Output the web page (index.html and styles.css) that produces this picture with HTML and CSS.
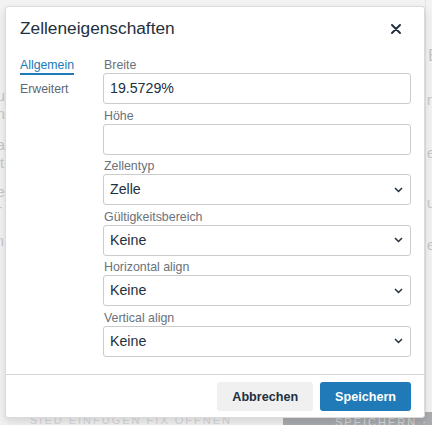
FILE: index.html
```html
<!DOCTYPE html>
<html lang="de">
<head>
<meta charset="utf-8">
<title>Zelleneigenschaften</title>
<link rel="stylesheet" href="styles.css">
</head>
<body>
<div class="page">
  <div class="bg-left">
    <span class="bg-frag f1">u</span>
    <span class="bg-frag f2">n</span>
    <span class="bg-frag f3">a</span>
    <span class="bg-frag f4">it</span>
    <span class="bg-frag f5">e</span>
    <span class="bg-frag f6">r</span>
    <span class="bg-frag f7">n</span>
  </div>
  <div class="bg-right">
    <span class="bg-frag r1">E</span>
    <span class="bg-frag r2">n</span>
    <span class="bg-frag r3">e</span>
    <span class="bg-frag r4">u</span>
    <span class="bg-frag r5">e</span>
  </div>
  <div class="bg-bottom">SIED EINFÜGEN FIX ÖFFNEN</div>
  <div class="bg-bottom-btn">SPEICHERN · SC</div>

  <div class="dialog" role="dialog">
    <div class="dialog-header">
      <h1 class="dialog-title">Zelleneigenschaften</h1>
      <button class="close" aria-label="Schließen">
        <svg width="10" height="10" viewBox="0 0 10 10"><path d="M1 1 L9 9 M9 1 L1 9" stroke="#222f3e" stroke-width="1.9" stroke-linecap="round" fill="none"/></svg>
      </button>
    </div>
    <div class="dialog-body">
      <div class="tabs">
        <div class="tab active">Allgemein</div>
        <div class="tab">Erweitert</div>
      </div>
      <div class="fields">
        <div class="field">
          <label class="label">Breite</label>
          <div class="input">19.5729%</div>
        </div>
        <div class="field">
          <label class="label">Höhe</label>
          <div class="input"></div>
        </div>
        <div class="field">
          <label class="label">Zellentyp</label>
          <div class="input select">Zelle<svg class="chev" width="9" height="6" viewBox="0 0 9 6"><path d="M1 1 L4.5 4.5 L8 1" stroke="#222f3e" stroke-width="1.5" fill="none"/></svg></div>
        </div>
        <div class="field">
          <label class="label">Gültigkeitsbereich</label>
          <div class="input select">Keine<svg class="chev" width="9" height="6" viewBox="0 0 9 6"><path d="M1 1 L4.5 4.5 L8 1" stroke="#222f3e" stroke-width="1.5" fill="none"/></svg></div>
        </div>
        <div class="field">
          <label class="label">Horizontal align</label>
          <div class="input select">Keine<svg class="chev" width="9" height="6" viewBox="0 0 9 6"><path d="M1 1 L4.5 4.5 L8 1" stroke="#222f3e" stroke-width="1.5" fill="none"/></svg></div>
        </div>
        <div class="field">
          <label class="label">Vertical align</label>
          <div class="input select">Keine<svg class="chev" width="9" height="6" viewBox="0 0 9 6"><path d="M1 1 L4.5 4.5 L8 1" stroke="#222f3e" stroke-width="1.5" fill="none"/></svg></div>
        </div>
      </div>
    </div>
    <div class="dialog-footer">
      <button class="btn btn-secondary">Abbrechen</button>
      <button class="btn btn-primary">Speichern</button>
    </div>
  </div>
</div>
</body>
</html>
```
FILE: styles.css
```css
* { box-sizing: border-box; }
html, body { margin: 0; padding: 0; }
body {
  width: 432px;
  height: 425px;
  overflow: hidden;
  background: #f2f2f2;
  font-family: "Liberation Sans", Arial, sans-serif;
  color: #222f3e;
}
.page {
  position: relative;
  width: 432px;
  height: 425px;
  padding: 6px 7px 0 5px;
}
.bg-left, .bg-right, .bg-bottom, .bg-bottom-btn {
  position: absolute;
  color: #c4c6c9;
  font-size: 14px;
}
.bg-left { left: 0; top: 0; width: 5px; height: 425px; }
.bg-frag { position: absolute; line-height: 16px; }
.f1 { left: -3px; top: 88px; }
.f2 { left: -3px; top: 106px; }
.f3 { left: -3px; top: 137px; }
.f4 { left: -3px; top: 155px; }
.f5 { left: -3px; top: 184px; }
.f6 { left: -3px; top: 202px; }
.f7 { left: -4px; top: 233px; }
.bg-right { left: 425px; top: 0; width: 7px; height: 425px; border-left: 1px solid #e3e3e3; }
.r1 { left: 2px; top: 48px; font-size: 17px; }
.r2 { left: 1px; top: 92px; }
.r3 { left: 1px; top: 145px; }
.r4 { left: 1px; top: 195px; }
.r5 { left: 1px; top: 237px; }
.bg-bottom { left: 30px; top: 414px; font-size: 11px; letter-spacing: 2px; color: #d3d5d7; }
.bg-bottom-btn {
  left: 283px; top: 412px; width: 149px; height: 13px;
  background: #a9acaf; color: #d6d7d8; font-size: 11px; letter-spacing: 2px; padding: 4px 0 0 52px;
}

.dialog {
  position: relative;
  width: 420px;
  height: 412px;
  background: #fff;
  border: 1px solid #dadada;
  border-radius: 3px;
  box-shadow: 0 4px 8px rgba(0,0,0,0.12);
  display: flex;
  flex-direction: column;
}
.dialog-header {
  display: flex;
  justify-content: space-between;
  align-items: flex-start;
  padding: 9px 23px 0 14px;
  height: 42px;
}
.dialog-title {
  margin: 0;
  font-size: 17.3px;
  line-height: 24px;
  font-weight: normal;
  color: #222f3e;
}
.close {
  border: 0;
  background: none;
  padding: 0;
  margin-top: 8px;
  width: 10px;
  height: 10px;
  display: block;
}
.close svg { display: block; }
.dialog-body {
  flex: 1;
  display: flex;
  padding: 9px 13px 0 14px;
}
.tabs {
  width: 83px;
  flex: none;
}
.tab {
  font-size: 12.3px;
  line-height: 14px;
  padding-bottom: 1px;
  border-bottom: 2px solid transparent;
  margin-bottom: 7px;
  color: #5f6771;
  width: max-content;
}
.tab.active {
  color: #207ab7;
  border-bottom-color: #207ab7;
}
.fields { flex: 1; }
.field { margin-bottom: 4.5px; }
.label {
  display: block;
  font-size: 12.4px;
  line-height: 14px;
  margin-bottom: 1px;
  padding-left: 1px;
  color: #6a727b;
}
.input {
  height: 31px;
  border: 1px solid #cccccc;
  border-radius: 3px;
  font-size: 14.2px;
  line-height: 29px;
  padding: 0 6px;
  color: #222f3e;
  display: flex;
  align-items: center;
  justify-content: space-between;
}
.chev { display: block; margin-right: 1px; }
.dialog-footer {
  border-top: 1px solid #d6d6d6;
  display: flex;
  justify-content: flex-end;
  gap: 7px;
  padding: 7px 13px 6px;
}
.btn {
  height: 29px;
  border: 0;
  border-radius: 3px;
  font-family: "Liberation Sans", Arial, sans-serif;
  font-size: 12.6px;
  font-weight: bold;
  padding: 0 15px;
}
.btn-secondary { background: #f0f0f0; color: #222f3e; }
.btn-primary { background: #207ab7; color: #fff; }
```
